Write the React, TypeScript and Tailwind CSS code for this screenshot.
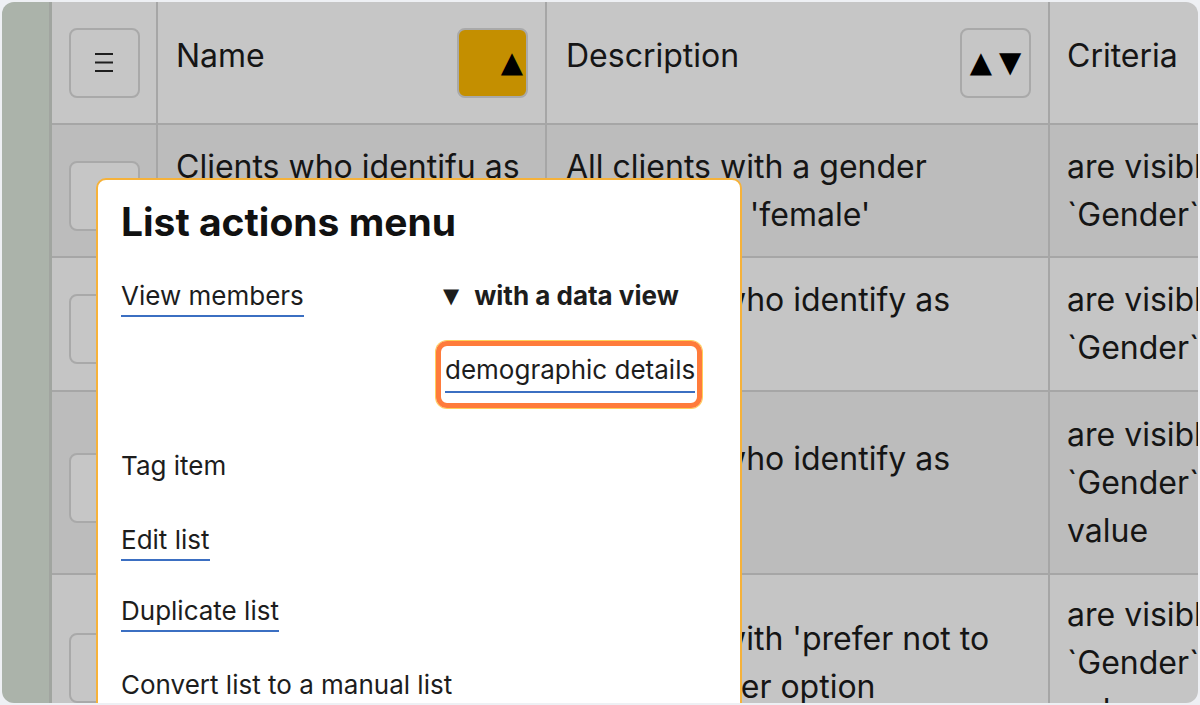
import React from "react";

type Row = {
  height: string;
  bg: string;
  name: string[];
  desc: string[];
  crit: string[];
};

const rows: Row[] = [
  {
    height: "h-[133px]",
    bg: "bg-[#bcbcbc]",
    name: ["Clients who identifu as", "'female'"],
    desc: ["All clients with a gender", "category of 'female'"],
    crit: ["are visible when the", "`Gender` field is 'female'"],
  },
  {
    height: "h-[134px]",
    bg: "bg-[#c5c5c5]",
    name: ["Clients who identify as", "'male'"],
    desc: ["All clients who identify as", "'male'"],
    crit: ["are visible when the", "`Gender` field is 'male'"],
  },
  {
    height: "h-[183px]",
    bg: "bg-[#bcbcbc]",
    name: ["Clients who identify as", "'other'"],
    desc: ["All clients who identify as", "'other'"],
    crit: ["are visible when the", "`Gender` field has this", "value"],
  },
  {
    height: "h-[178px]",
    bg: "bg-[#c5c5c5]",
    name: ["Clients who prefer not", "to say"],
    desc: ["All clients with 'prefer not to", "say' a gender option"],
    crit: ["are visible when the", "`Gender` field has this", "value"],
  },
];

const glyph = "font-['DejaVu_Sans',sans-serif]";

const Lines = ({ lines }: { lines: string[] }) => (
  <div className="whitespace-nowrap text-[32px] leading-[48px] text-[#151515]">
    {lines.map((l, i) => (
      <div key={i}>{l}</div>
    ))}
  </div>
);

const SquareButton = ({ className = "", children }: { className?: string; children?: React.ReactNode }) => (
  <div
    className={
      "w-[71px] h-[70px] shrink-0 rounded-[8px] border-2 border-[#a9a9a9] flex items-center " + className
    }
  >
    {children}
  </div>
);

const MenuIcon = () => (
  <svg width="20" height="22" viewBox="0 0 20 22" className="mt-[-3px]">
    <g stroke="#1e1e1e" strokeWidth="2">
      <line x1="1" y1="3" x2="19" y2="3" />
      <line x1="1" y1="11.5" x2="19" y2="11.5" />
      <line x1="1" y1="20" x2="19" y2="20" />
    </g>
  </svg>
);

const ActionsMenu = () => (
  <div className="absolute left-[94px] top-[176px] w-[646px] h-[560px] rounded-[10px] border-2 border-[#f6b23a] bg-white pl-[23px] pt-[18px] text-[#1d1d1d]">
    <h2 className="text-[39px] leading-[48px] font-bold text-[#111]">List actions menu</h2>

    <div className="mt-[32px] flex text-[26px] leading-[36px]">
      <div className="w-[322px]">
        <a className="block w-fit border-b-2 border-[#3b6fc2] pb-[1px]">View members</a>
      </div>
      <div className="flex flex-col">
        <div className="flex items-center gap-[15px] font-bold">
          <span className={glyph + " text-[21px]"}>▼</span>
          <span>with a data view</span>
        </div>
        <div className="mt-[27px] -ml-[7px] w-fit rounded-[11px] border-[5px] border-[#ff7b3b] pl-[4px] pr-[2px] pt-[6px] pb-[10px] shadow-[0_0_0_1px_#ffcf5a]">
          <a className="block w-fit border-b-2 border-[#3b6fc2] pb-[3px]">demographic details</a>
        </div>
      </div>
    </div>

    <div className="text-[26px] leading-[36px]">
      <div className="mt-[40px]">Tag item</div>
      <a className="mt-[38px] block w-fit border-b-2 border-[#3b6fc2] pb-[1px]">Edit list</a>
      <a className="mt-[32px] block w-fit border-b-2 border-[#3b6fc2] pb-[1px]">Duplicate list</a>
      <div className="mt-[35px]">Convert list to a manual list</div>
    </div>
  </div>
);

export default function App() {
  return (
    <div className="w-[1200px] h-[705px] bg-[#eef0f4] p-[2px] font-['Inter',sans-serif]">
      <div className="relative flex h-full w-full overflow-hidden rounded-[12px]">
        <div className="w-[50px] shrink-0 bg-[#abb3aa] border-r-[3px] border-[#a1a5a0]" />

        <div className="flex flex-col">
          {/* header */}
          <div className="flex h-[123px] shrink-0 border-b-2 border-[#a6a6a6] bg-[#c6c6c6]">
            <div className="flex w-[106px] shrink-0 justify-center border-r-2 border-[#a6a6a6] pt-[26px]">
              <SquareButton className="justify-center">
                <MenuIcon />
              </SquareButton>
            </div>
            <div className="flex w-[389px] shrink-0 items-start justify-between border-r-2 border-[#a6a6a6] pl-[18px] pr-[17px]">
              <div className="pt-[30px] text-[32px] leading-[48px] text-[#151515]">Name</div>
              <SquareButton className="mt-[26px] justify-end bg-[#c48f00] pr-[3px]">
                <span className={glyph + " text-[29px] text-black"}>▲</span>
              </SquareButton>
            </div>
            <div className="flex w-[503px] shrink-0 items-start justify-between border-r-2 border-[#a6a6a6] pl-[19px] pr-[17px]">
              <div className="pt-[30px] text-[32px] leading-[48px] text-[#151515]">Description</div>
              <SquareButton className="mt-[26px] justify-center gap-[7px]">
                <span className={glyph + " text-[29px] text-black"}>▲</span>
                <span className={glyph + " text-[29px] text-black"}>▼</span>
              </SquareButton>
            </div>
            <div className="w-[520px] shrink-0 pl-[17px] pt-[30px] text-[32px] leading-[48px] text-[#151515]">
              Criteria
            </div>
          </div>

          {rows.map((r, i) => (
            <div key={i} className={"flex shrink-0 border-b-2 border-[#a6a6a6] " + r.height + " " + r.bg}>
              <div className="flex w-[106px] shrink-0 items-center justify-center border-r-2 border-[#a6a6a6]">
                <SquareButton className="mt-[10px] bg-[#c6c6c6]" />
              </div>
              <div className="flex w-[389px] shrink-0 items-center overflow-hidden border-r-2 border-[#a6a6a6] pl-[18px]">
                <Lines lines={r.name} />
              </div>
              <div className="flex w-[503px] shrink-0 items-center overflow-hidden border-r-2 border-[#a6a6a6] pl-[19px]">
                <Lines lines={r.desc} />
              </div>
              <div className="flex w-[520px] shrink-0 items-center pl-[17px]">
                <Lines lines={r.crit} />
              </div>
            </div>
          ))}
        </div>

        <ActionsMenu />
      </div>
    </div>
  );
}
